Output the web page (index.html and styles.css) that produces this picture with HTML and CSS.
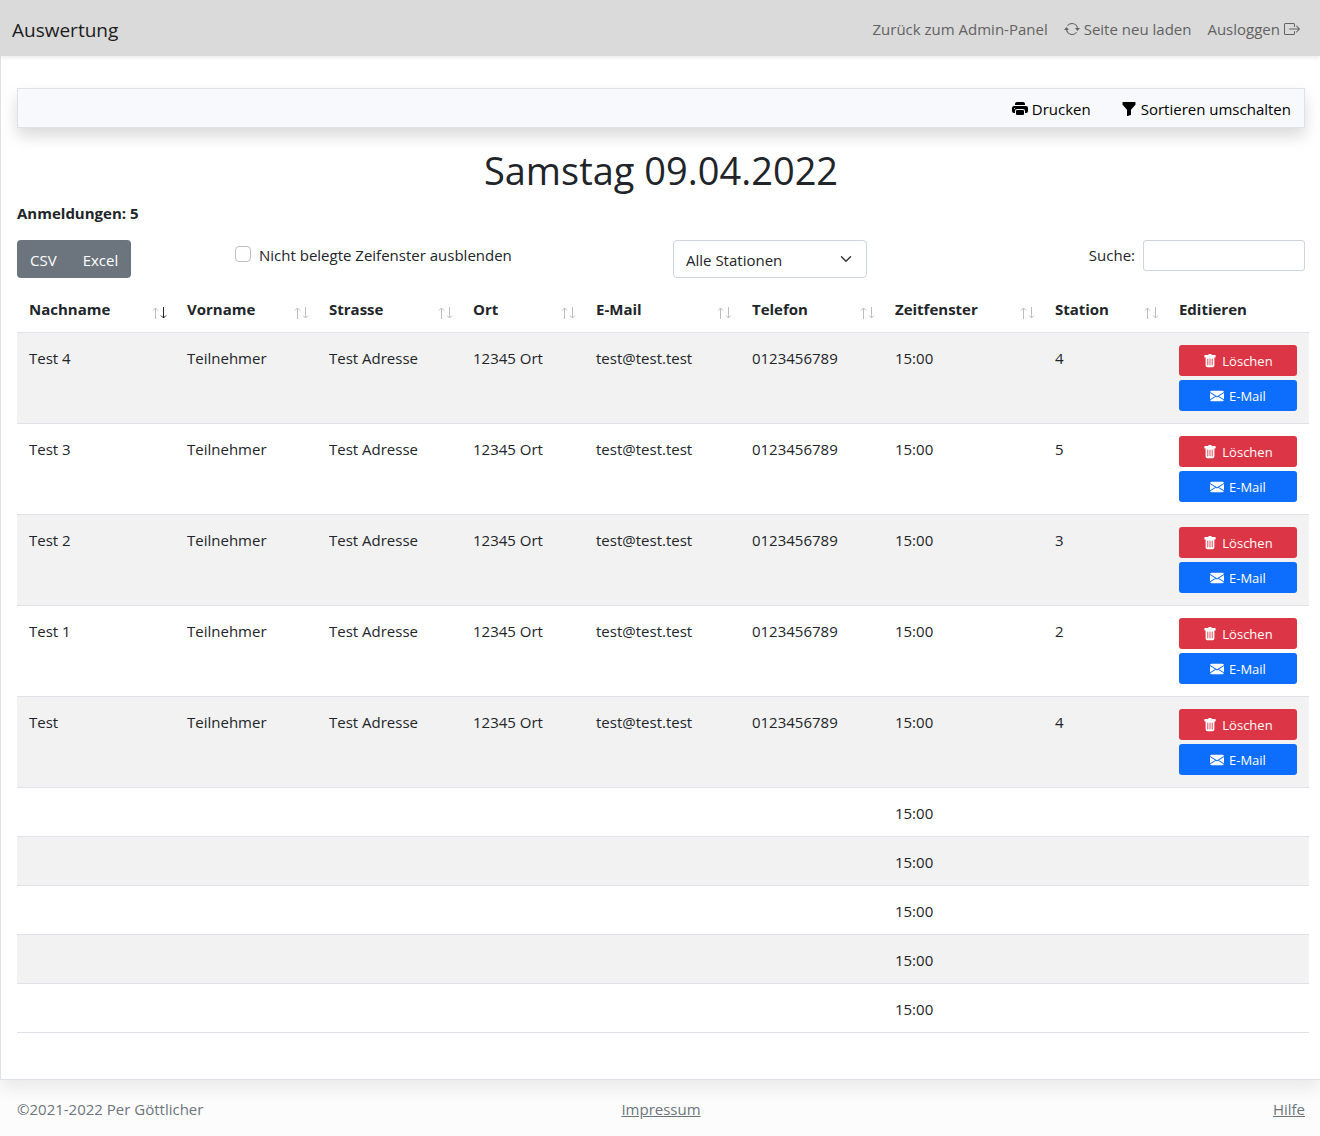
FILE: index.html
```html
<!DOCTYPE html>
<html lang="de">
<head>
<meta charset="utf-8">
<meta name="viewport" content="width=device-width, initial-scale=1">
<title>Auswertung</title>
<link rel="stylesheet" href="styles.css">
</head>
<body>
<svg class="sprite" aria-hidden="true">
  <symbol id="repeat" viewBox="0 0 16 16"><path d="M11.534 7h3.932a.25.25 0 0 1 .192.41l-1.966 2.36a.25.25 0 0 1-.384 0l-1.966-2.36a.25.25 0 0 1 .192-.41zm-11 2h3.932a.25.25 0 0 0 .192-.41L2.692 6.23a.25.25 0 0 0-.384 0L.342 8.59A.25.25 0 0 0 .534 9z"/><path fill-rule="evenodd" d="M8 3c-1.552 0-2.94.707-3.857 1.818a.5.5 0 1 1-.771-.636A6.002 6.002 0 0 1 13.917 7H12.9A5.002 5.002 0 0 0 8 3zM3.1 9a5.002 5.002 0 0 0 8.757 2.182.5.5 0 1 1 .771.636A6.002 6.002 0 0 1 2.083 9H3.1z"/></symbol>
  <symbol id="exit" viewBox="0 0 16 16"><path fill-rule="evenodd" d="M10 12.5a.5.5 0 0 1-.5.5h-8a.5.5 0 0 1-.5-.5v-9a.5.5 0 0 1 .5-.5h8a.5.5 0 0 1 .5.5v2a.5.5 0 0 0 1 0v-2A1.5 1.5 0 0 0 9.5 2h-8A1.5 1.5 0 0 0 0 3.5v9A1.5 1.5 0 0 0 1.5 14h8a1.5 1.5 0 0 0 1.5-1.5v-2a.5.5 0 0 0-1 0v2z"/><path fill-rule="evenodd" d="M15.854 8.354a.5.5 0 0 0 0-.708l-3-3a.5.5 0 0 0-.708.708L14.293 7.5H5.5a.5.5 0 0 0 0 1h8.793l-2.147 2.146a.5.5 0 0 0 .708.708l3-3z"/></symbol>
  <symbol id="printer" viewBox="0 0 16 16"><path d="M5 1a2 2 0 0 0-2 2v1h10V3a2 2 0 0 0-2-2H5zm6 8H5a1 1 0 0 0-1 1v3a1 1 0 0 0 1 1h6a1 1 0 0 0 1-1v-3a1 1 0 0 0-1-1z"/><path d="M0 7a2 2 0 0 1 2-2h12a2 2 0 0 1 2 2v3a2 2 0 0 1-2 2h-1v-2a2 2 0 0 0-2-2H5a2 2 0 0 0-2 2v2H2a2 2 0 0 1-2-2V7zm2.500 1a.5.5 0 1 0 0-1 .5.5 0 0 0 0 1z"/></symbol>
  <symbol id="funnel" viewBox="0 0 16 16"><path d="M1.500 1.500A.5.5 0 0 1 2 1h12a.5.5 0 0 1 .5.5v2a.5.5 0 0 1-.128.334L10 8.692V13.500a.5.5 0 0 1-.342.474l-3 1A.5.5 0 0 1 6 14.500V8.692L1.628 3.834A.5.5 0 0 1 1.500 3.500v-2z"/></symbol>
  <symbol id="trash" viewBox="0 0 16 16"><path d="M2.500 1a1 1 0 0 0-1 1v1a1 1 0 0 0 1 1H3v9a2 2 0 0 0 2 2h6a2 2 0 0 0 2-2V4h.5a1 1 0 0 0 1-1V2a1 1 0 0 0-1-1H10a1 1 0 0 0-1-1H7a1 1 0 0 0-1 1H2.500zm3 4a.5.5 0 0 1 .5.5v7a.5.5 0 0 1-1 0v-7a.5.5 0 0 1 .5-.5zM8 5a.5.5 0 0 1 .5.5v7a.5.5 0 0 1-1 0v-7A.5.5 0 0 1 8 5zm3 .5v7a.5.5 0 0 1-1 0v-7a.5.5 0 0 1 1 0z"/></symbol>
  <symbol id="mail" viewBox="0 0 16 16"><path d="M.05 3.555A2 2 0 0 1 2 2h12a2 2 0 0 1 1.950 1.555L8 8.414.05 3.555ZM0 4.697v7.104l5.803-3.558L0 4.697ZM6.761 8.830l-6.570 4.027A2 2 0 0 0 2 14h12a2 2 0 0 0 1.808-1.144l-6.570-4.027L8 9.586l-1.239-.757Zm3.436-.586L16 11.801V4.697l-5.803 3.546Z"/></symbol>
  <symbol id="up" viewBox="0 0 7 12"><path fill="none" stroke="currentColor" d="M3.500 12V1M1 3.500 3.500 1 6 3.500"/></symbol>
  <symbol id="down" viewBox="0 0 7 12"><path fill="none" stroke="currentColor" d="M3.500 0v11M1 8.500 3.500 11 6 8.500"/></symbol>
</svg>

<header class="navbar">
  <a class="brand" href="#">Auswertung</a>
  <nav class="nav">
    <a href="#">Zurück zum Admin-Panel</a>
    <a href="#"><svg class="icon"><use href="#repeat"/></svg> Seite neu laden</a>
    <a href="#">Ausloggen <svg class="icon"><use href="#exit"/></svg></a>
  </nav>
</header>

<main class="main">
  <div class="toolbar">
    <button type="button" class="tool"><svg class="icon"><use href="#printer"/></svg> Drucken</button>
    <button type="button" class="tool"><svg class="icon"><use href="#funnel"/></svg> Sortieren umschalten</button>
  </div>

  <h1 class="title">Samstag 09.04.2022</h1>
  <p class="count">Anmeldungen: 5</p>

  <div class="controls">
    <div class="export">
      <button type="button">CSV</button><button type="button">Excel</button>
    </div>
    <div class="check">
      <input type="checkbox" id="hide-empty">
      <label for="hide-empty">Nicht belegte Zeifenster ausblenden</label>
    </div>
    <div class="station">
      <select class="select" aria-label="Station">
        <option>Alle Stationen</option>
      </select>
      <svg class="chevron" viewBox="0 0 16 16" aria-hidden="true"><path d="m2 5 6 6 6-6"/></svg>
    </div>
    <div class="search">
      <label for="search">Suche:</label>
      <input type="search" id="search">
    </div>
  </div>

  <table class="table">
    <colgroup>
      <col class="c-last"><col class="c-first"><col class="c-street"><col class="c-city"><col class="c-mail"><col class="c-phone"><col class="c-slot"><col class="c-station"><col class="c-edit">
    </colgroup>
    <thead>
      <tr>
        <th><div class="head">Nachname<span class="sort desc"><svg><use href="#up"/></svg><svg><use href="#down"/></svg></span></div></th>
        <th><div class="head">Vorname<span class="sort"><svg><use href="#up"/></svg><svg><use href="#down"/></svg></span></div></th>
        <th><div class="head">Strasse<span class="sort"><svg><use href="#up"/></svg><svg><use href="#down"/></svg></span></div></th>
        <th><div class="head">Ort<span class="sort"><svg><use href="#up"/></svg><svg><use href="#down"/></svg></span></div></th>
        <th><div class="head">E-Mail<span class="sort"><svg><use href="#up"/></svg><svg><use href="#down"/></svg></span></div></th>
        <th><div class="head">Telefon<span class="sort"><svg><use href="#up"/></svg><svg><use href="#down"/></svg></span></div></th>
        <th><div class="head">Zeitfenster<span class="sort"><svg><use href="#up"/></svg><svg><use href="#down"/></svg></span></div></th>
        <th><div class="head">Station<span class="sort"><svg><use href="#up"/></svg><svg><use href="#down"/></svg></span></div></th>
        <th><div class="head">Editieren</div></th>
      </tr>
    </thead>
    <tbody>
      <tr><td>Test 4</td><td>Teilnehmer</td><td>Test Adresse</td><td>12345 Ort</td><td>test@test.test</td><td>0123456789</td><td>15:00</td><td>4</td><td><div class="actions"><button type="button" class="btn danger"><svg class="icon"><use href="#trash"/></svg> Löschen</button><button type="button" class="btn primary"><svg class="icon"><use href="#mail"/></svg> E-Mail</button></div></td></tr>
      <tr><td>Test 3</td><td>Teilnehmer</td><td>Test Adresse</td><td>12345 Ort</td><td>test@test.test</td><td>0123456789</td><td>15:00</td><td>5</td><td><div class="actions"><button type="button" class="btn danger"><svg class="icon"><use href="#trash"/></svg> Löschen</button><button type="button" class="btn primary"><svg class="icon"><use href="#mail"/></svg> E-Mail</button></div></td></tr>
      <tr><td>Test 2</td><td>Teilnehmer</td><td>Test Adresse</td><td>12345 Ort</td><td>test@test.test</td><td>0123456789</td><td>15:00</td><td>3</td><td><div class="actions"><button type="button" class="btn danger"><svg class="icon"><use href="#trash"/></svg> Löschen</button><button type="button" class="btn primary"><svg class="icon"><use href="#mail"/></svg> E-Mail</button></div></td></tr>
      <tr><td>Test 1</td><td>Teilnehmer</td><td>Test Adresse</td><td>12345 Ort</td><td>test@test.test</td><td>0123456789</td><td>15:00</td><td>2</td><td><div class="actions"><button type="button" class="btn danger"><svg class="icon"><use href="#trash"/></svg> Löschen</button><button type="button" class="btn primary"><svg class="icon"><use href="#mail"/></svg> E-Mail</button></div></td></tr>
      <tr><td>Test</td><td>Teilnehmer</td><td>Test Adresse</td><td>12345 Ort</td><td>test@test.test</td><td>0123456789</td><td>15:00</td><td>4</td><td><div class="actions"><button type="button" class="btn danger"><svg class="icon"><use href="#trash"/></svg> Löschen</button><button type="button" class="btn primary"><svg class="icon"><use href="#mail"/></svg> E-Mail</button></div></td></tr>
      <tr><td></td><td></td><td></td><td></td><td></td><td></td><td>15:00</td><td></td><td></td></tr>
      <tr><td></td><td></td><td></td><td></td><td></td><td></td><td>15:00</td><td></td><td></td></tr>
      <tr><td></td><td></td><td></td><td></td><td></td><td></td><td>15:00</td><td></td><td></td></tr>
      <tr><td></td><td></td><td></td><td></td><td></td><td></td><td>15:00</td><td></td><td></td></tr>
      <tr><td></td><td></td><td></td><td></td><td></td><td></td><td>15:00</td><td></td><td></td></tr>
    </tbody>
  </table>
</main>

<footer class="footer">
  <span>©2021-2022 Per Göttlicher</span>
  <a href="#">Impressum</a>
  <a href="#">Hilfe</a>
</footer>
</body>
</html>
```
FILE: styles.css
```css
*, *::before, *::after {
  box-sizing: border-box;
}

body {
  margin: 0;
  min-height: 100vh;
  display: flex;
  flex-direction: column;
  background: #fcfcfc;
  color: #212529;
  font: 15px/24px "Segoe UI", "Open Sans", "Noto Sans", sans-serif;
}

button, input, select {
  margin: 0;
  font: inherit;
  color: inherit;
}

.sprite {
  display: none;
}

.icon {
  width: 16px;
  height: 16px;
  fill: currentColor;
}

/* Top bar */
.navbar {
  position: relative;
  z-index: 1;
  display: flex;
  align-items: center;
  justify-content: space-between;
  height: 56px;
  padding: 2px 12px 0;
  background: #dadada;
  box-shadow: 0 2px 4px rgba(0, 0, 0, .075);
}

.brand {
  padding-top: 2px;
  font-size: 19px;
  line-height: 30px;
  color: #1c1c1c;
  text-decoration: none;
}

.nav {
  display: flex;
}

.nav a {
  display: flex;
  align-items: center;
  gap: 4px;
  padding: 8px;
  color: #626262;
  text-decoration: none;
}

/* Content */
.main {
  flex: 1;
  padding: 32px 15px 46px 16px;
  background: #fff;
  border: solid #dee2e6;
  border-width: 0 0 1px 1px;
  box-shadow: 0 8px 16px rgba(0, 0, 0, .08);
}

.toolbar {
  display: flex;
  justify-content: flex-end;
  gap: 6px;
  height: 40px;
  padding: 2px 1px 0;
  background: #f8f9fc;
  border: 1px solid #dee2e6;
  box-shadow: 0 8px 16px rgba(0, 0, 0, .15);
}

.tool {
  display: flex;
  align-items: center;
  gap: 4px;
  padding: 0 12px;
  border: 0;
  background: none;
  color: #000;
}

.title {
  margin: 18px 0 7px;
  font-size: 38px;
  font-weight: 400;
  line-height: 48px;
  text-align: center;
}

.count {
  margin: 0 0 15px;
  font-weight: 700;
}

.controls {
  display: grid;
  grid-template-columns: 218fr 438fr 194fr 438fr;
  align-items: start;
}

.export {
  display: flex;
}

.export button {
  height: 38px;
  padding: 2px 13px 0;
  border: 0;
  background: #6c757d;
  color: #fff;
}

.export button:first-child {
  border-radius: 4px 0 0 4px;
}

.export button:last-child {
  border-radius: 0 4px 4px 0;
}

.check {
  display: flex;
  align-items: center;
  gap: 8px;
  padding-top: 3px;
}

.check input {
  appearance: none;
  width: 16px;
  height: 16px;
  margin-bottom: 2px;
  border: 1px solid #bfbfbf;
  border-radius: 4px;
  background: #fff;
}

.station {
  position: relative;
}

.select {
  appearance: none;
  display: block;
  width: 100%;
  height: 38px;
  padding: 2px 36px 0 12px;
  border: 1px solid #ced4da;
  border-radius: 4px;
  background: #fff;
}

.chevron {
  position: absolute;
  top: 13px;
  right: 15px;
  width: 12px;
  height: 12px;
  fill: none;
  stroke: #343a40;
  stroke-width: 2;
  stroke-linecap: round;
  stroke-linejoin: round;
  pointer-events: none;
}

.search {
  display: flex;
  justify-content: flex-end;
  gap: 8px;
}

.search label {
  padding-top: 3px;
}

.search input {
  width: 162px;
  height: 31px;
  padding: 4px 8px;
  border: 1px solid #ced4da;
  border-radius: 3px;
  background: #fff;
}

/* Table, four pixels wider than the content column */
.table {
  width: calc(100% + 4px);
  margin-top: 6px;
  table-layout: fixed;
  border-collapse: separate;
  border-spacing: 0;
}

.c-last { width: 12.23%; }
.c-first { width: 10.99%; }
.c-street { width: 11.15%; }
.c-city { width: 9.52%; }
.c-mail { width: 12.07%; }
.c-phone { width: 11.07%; }
.c-slot { width: 12.38%; }
.c-station { width: 9.6%; }
.c-edit { width: 10.99%; }

.table th {
  height: 49px;
  padding: 2px 8px 0 12px;
  border-bottom: 1px solid #dee2e6;
  font-weight: 700;
  text-align: left;
}

.table td {
  height: 49px;
  padding: 13px 12px 11px;
  border-bottom: 1px solid #dee2e6;
  vertical-align: top;
}

.table td:last-child {
  padding: 12px;
}

.table tbody tr:nth-child(odd) {
  background: #f2f2f2;
}

.head {
  display: flex;
  align-items: center;
  justify-content: space-between;
}

.sort {
  display: flex;
  gap: 1px;
  padding-top: 8px;
  color: #bcbec0;
}

.sort svg {
  width: 7px;
  height: 12px;
}

.sort.desc svg:last-child {
  color: #212529;
}

.actions {
  display: grid;
  gap: 4px;
}

.btn {
  display: flex;
  align-items: center;
  justify-content: center;
  gap: 5px;
  height: 31px;
  padding: 1px 8px 0;
  border: 0;
  border-radius: 3px;
  color: #fff;
  font-size: 13px;
}

.btn .icon {
  width: 14px;
  height: 14px;
}

.danger { background: #dc3545; }
.primary { background: #0d6efd; }

/* Footer */
.footer {
  display: grid;
  grid-template-columns: 1fr auto 1fr;
  align-items: center;
  height: 56px;
  padding: 2px 15px 0 17px;
  color: #6c757d;
}

.footer a {
  color: inherit;
}

.footer a:last-child {
  justify-self: end;
}
```
